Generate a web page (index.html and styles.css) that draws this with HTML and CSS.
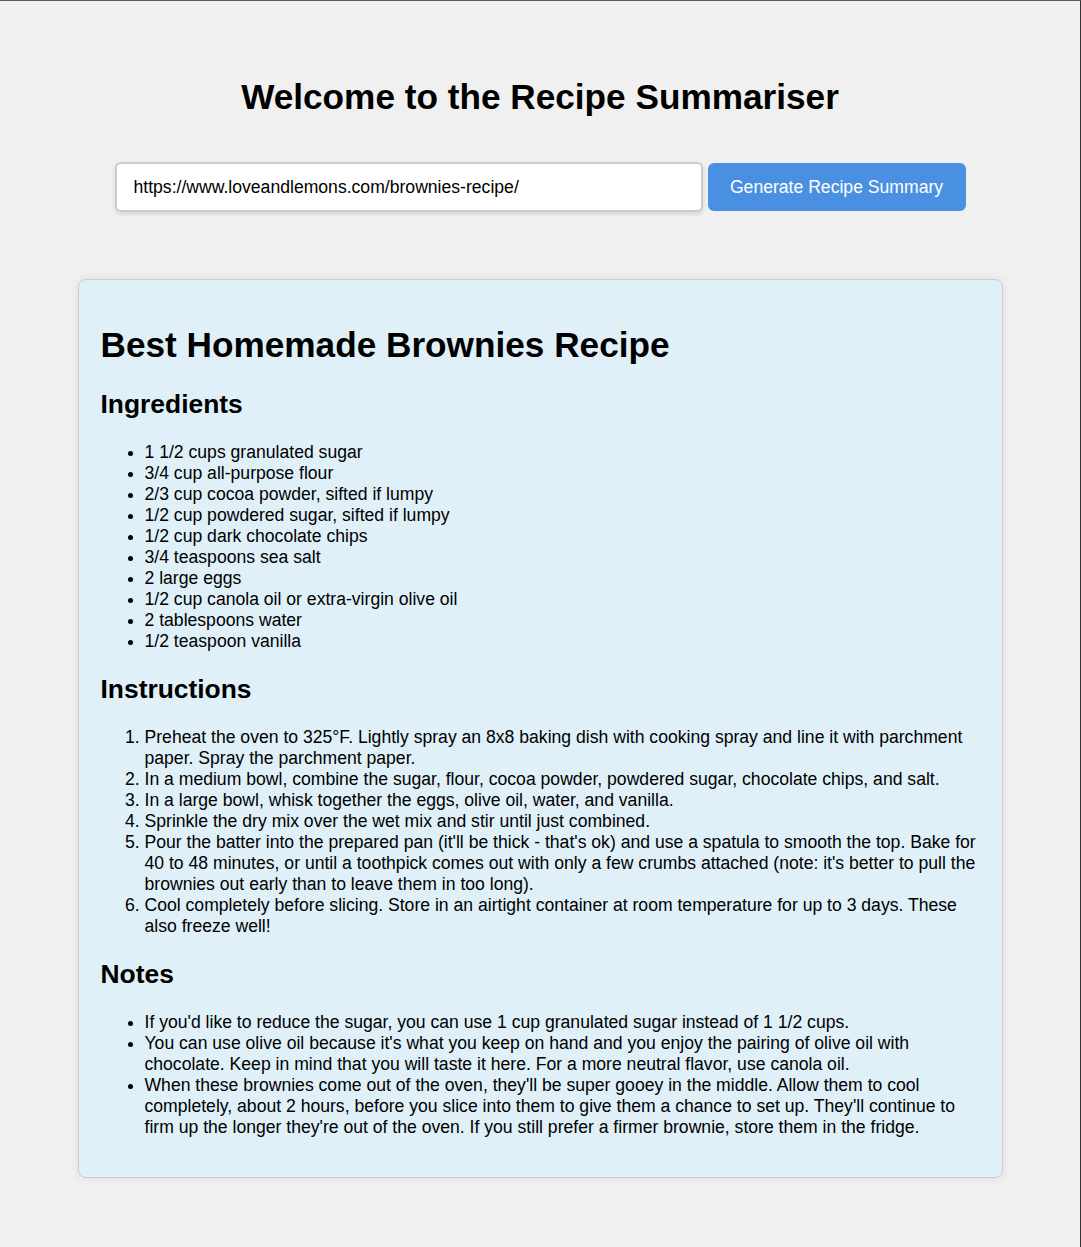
FILE: index.html
```html
<!DOCTYPE html>
<html lang="en">
<head>
<meta charset="utf-8">
<title>Recipe Summariser</title>
<link rel="stylesheet" href="styles.css">
</head>
<body>
<div class="page">
  <h1 class="title">Welcome to the Recipe Summariser</h1>
  <form class="url-form">
    <input class="url-input" type="text" value="https://www.loveandlemons.com/brownies-recipe/">
    <button class="submit-btn" type="button">Generate Recipe Summary</button>
  </form>
  <div class="recipe-card">
    <h1 class="recipe-title">Best Homemade Brownies Recipe</h1>
    <h2 class="section-title">Ingredients</h2>
    <ul class="list">
      <li>1 1/2 cups granulated sugar</li>
      <li>3/4 cup all-purpose flour</li>
      <li>2/3 cup cocoa powder, sifted if lumpy</li>
      <li>1/2 cup powdered sugar, sifted if lumpy</li>
      <li>1/2 cup dark chocolate chips</li>
      <li>3/4 teaspoons sea salt</li>
      <li>2 large eggs</li>
      <li>1/2 cup canola oil or extra-virgin olive oil</li>
      <li>2 tablespoons water</li>
      <li>1/2 teaspoon vanilla</li>
    </ul>
    <h2 class="section-title">Instructions</h2>
    <ol class="list">
      <li>Preheat the oven to 325°F. Lightly spray an 8x8 baking dish with cooking spray and line it with parchment paper. Spray the parchment paper.</li>
      <li>In a medium bowl, combine the sugar, flour, cocoa powder, powdered sugar, chocolate chips, and salt.</li>
      <li>In a large bowl, whisk together the eggs, olive oil, water, and vanilla.</li>
      <li>Sprinkle the dry mix over the wet mix and stir until just combined.</li>
      <li>Pour the batter into the prepared pan (it'll be thick - that's ok) and use a spatula to smooth the top. Bake for 40 to 48 minutes, or until a toothpick comes out with only a few crumbs attached (note: it's better to pull the brownies out early than to leave them in too long).</li>
      <li>Cool completely before slicing. Store in an airtight container at room temperature for up to 3 days. These also freeze well!</li>
    </ol>
    <h2 class="section-title">Notes</h2>
    <ul class="list">
      <li>If you'd like to reduce the sugar, you can use 1 cup granulated sugar instead of 1 1/2 cups.</li>
      <li>You can use olive oil because it's what you keep on hand and you enjoy the pairing of olive oil with chocolate. Keep in mind that you will taste it here. For a more neutral flavor, use canola oil.</li>
      <li>When these brownies come out of the oven, they'll be super gooey in the middle. Allow them to cool completely, about 2 hours, before you slice into them to give them a chance to set up. They'll continue to firm up the longer they're out of the oven. If you still prefer a firmer brownie, store them in the fridge.</li>
    </ul>
  </div>
</div>
</body>
</html>
```

FILE: styles.css
```css
html {
  background: #f0f0f0;
  border-top: 1px solid #5a5a5a;
  border-right: 1px solid #333;
  min-height: 100%;
  box-sizing: border-box;
}
body {
  margin: 0;
  font-family: "Liberation Sans", Arial, sans-serif;
  font-size: 17.6px;
  color: #000;
}
.page {
  padding: 40px 0 60px;
  display: flex;
  flex-direction: column;
  align-items: center;
}
.title {
  font-size: 35.2px;
  font-weight: bold;
  margin: 36px 0 45px;
  line-height: 1.15;
}
.url-form {
  display: flex;
  gap: 5px;
  align-items: center;
  margin: 0 0 67px;
}
.url-input {
  box-sizing: border-box;
  width: 588px;
  height: 50px;
  padding: 0 17px;
  border: 2px solid #ccc;
  border-radius: 6px;
  background: #fff;
  box-shadow: 0 2px 4px rgba(0,0,0,0.12);
  font-family: "Liberation Sans", Arial, sans-serif;
  font-size: 17.6px;
  color: #000;
  outline: none;
}
.submit-btn {
  box-sizing: border-box;
  width: 258px;
  height: 48px;
  border: none;
  border-radius: 6px;
  background: #4a90e2;
  color: #fff;
  font-family: "Liberation Sans", Arial, sans-serif;
  font-size: 17.6px;
  cursor: pointer;
}
.recipe-card {
  box-sizing: border-box;
  width: 925px;
  padding: 21px 22px 22px;
  background: #dff0f8;
  border: 1px solid #ccc;
  border-radius: 8px;
  box-shadow: 0 0 10px rgba(0,0,0,0.08);
  line-height: 21px;
}
.recipe-title {
  font-size: 35.2px;
  line-height: 1.15;
  margin: 23.6px 0;
}
.section-title {
  font-size: 26.4px;
  line-height: 1.15;
  margin: 21.9px 0 22.6px;
}
.list {
  margin: 17.6px 0;
  padding-left: 44px;
}
```
